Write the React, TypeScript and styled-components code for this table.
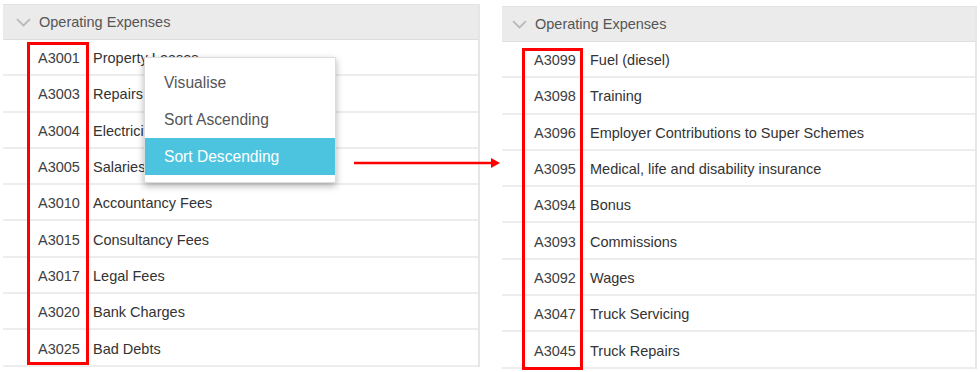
import React from "react";
import styled, { createGlobalStyle } from "styled-components";

const Global = createGlobalStyle`
  html, body { margin: 0; padding: 0; background: #ffffff; }
  body { font-family: Arial, "Liberation Sans", sans-serif; }
`;

const Page = styled.div`
  position: relative;
  display: flex;
  align-items: flex-start;
  gap: 22px;
  padding: 4px 0 0 3px;
  width: 980px;
  height: 372px;
  box-sizing: border-box;
  overflow: hidden;
`;

const Panel = styled.div<{ $w: number; $top: number }>`
  position: relative;
  width: ${(p) => p.$w}px;
  margin-top: ${(p) => p.$top}px;
  border-right: 2px solid #e6e6e6;
  box-sizing: border-box;
`;

const Header = styled.div<{ $pad: number }>`
  display: flex;
  align-items: center;
  height: 36px;
  box-sizing: border-box;
  background: #ebebeb;
  border-top: 1px solid #e2e2e2;
  border-bottom: 1px solid #dedede;
  padding-left: ${(p) => p.$pad}px;
  color: #555555;
  font-size: 14.5px;
`;

const Chevron = styled.svg`
  width: 15px;
  height: 9px;
  margin-right: 8px;
  flex-shrink: 0;
`;

const Row = styled.div`
  display: flex;
  align-items: center;
  height: 36.3px;
  padding-top: 2px;
  box-sizing: border-box;
  border-bottom: 2px solid #ededed;
  font-size: 14.5px;
  color: #333333;
`;

const Code = styled.div<{ $pad: number; $w: number }>`
  width: ${(p) => p.$w}px;
  padding-left: ${(p) => p.$pad}px;
  box-sizing: border-box;
  flex-shrink: 0;
  color: #404040;
`;

const Name = styled.div`
  white-space: nowrap;
`;

const RedBox = styled.div<{ $l: number; $t: number; $w: number; $h: number }>`
  position: absolute;
  left: ${(p) => p.$l}px;
  top: ${(p) => p.$t}px;
  width: ${(p) => p.$w}px;
  height: ${(p) => p.$h}px;
  border: 3px solid #ff0000;
  box-sizing: border-box;
  pointer-events: none;
`;

const Menu = styled.div`
  position: absolute;
  left: 141px;
  top: 53px;
  width: 192px;
  padding: 6px 0 7px;
  background: #ffffff;
  border: 1px solid #dcdcdc;
  box-shadow: 0 3px 7px rgba(0, 0, 0, 0.3);
  box-sizing: border-box;
`;

const MenuItem = styled.div<{ $active?: boolean }>`
  height: 37px;
  display: flex;
  align-items: center;
  padding-left: 19px;
  font-size: 15.6px;
  color: ${(p) => (p.$active ? "#ffffff" : "#555555")};
  background: ${(p) => (p.$active ? "#4dc4df" : "transparent")};
`;

const Arrow = styled.svg`
  position: absolute;
  left: 352px;
  top: 157px;
  width: 150px;
  height: 12px;
`;

const left = [
  ["A3001", "Property Leases"],
  ["A3003", "Repairs"],
  ["A3004", "Electricity"],
  ["A3005", "Salaries"],
  ["A3010", "Accountancy Fees"],
  ["A3015", "Consultancy Fees"],
  ["A3017", "Legal Fees"],
  ["A3020", "Bank Charges"],
  ["A3025", "Bad Debts"],
];

const right = [
  ["A3099", "Fuel (diesel)"],
  ["A3098", "Training"],
  ["A3096", "Employer Contributions to Super Schemes"],
  ["A3095", "Medical, life and disability insurance"],
  ["A3094", "Bonus"],
  ["A3093", "Commissions"],
  ["A3092", "Wages"],
  ["A3047", "Truck Servicing"],
  ["A3045", "Truck Repairs"],
];

const ChevronIcon = () => (
  <Chevron viewBox="0 0 15 9">
    <path d="M1 1.2 L7.5 7.5 L14 1.2" fill="none" stroke="#b9b9b9" strokeWidth="1.8" />
  </Chevron>
);

export default function App() {
  return (
    <>
      <Global />
      <Page>
        <Panel $w={477} $top={0}>
          <Header $pad={13}>
            <ChevronIcon />
            Operating Expenses
          </Header>
          {left.map(([c, n]) => (
            <Row key={c}>
              <Code $pad={35} $w={90}>{c}</Code>
              <Name>{n}</Name>
            </Row>
          ))}
          <RedBox $l={24} $t={38} $w={62} $h={323} />
          <Menu>
            <MenuItem>Visualise</MenuItem>
            <MenuItem>Sort Ascending</MenuItem>
            <MenuItem $active>Sort Descending</MenuItem>
          </Menu>
        </Panel>
        <Panel $w={475} $top={2}>
          <Header $pad={10}>
            <ChevronIcon />
            Operating Expenses
          </Header>
          {right.map(([c, n]) => (
            <Row key={c}>
              <Code $pad={32} $w={88}>{c}</Code>
              <Name>{n}</Name>
            </Row>
          ))}
          <RedBox $l={20} $t={42} $w={61} $h={322} />
        </Panel>
        <Arrow viewBox="0 0 150 12">
          <line x1="2" y1="6" x2="140" y2="6" stroke="#ff0000" strokeWidth="2.6" />
          <polygon points="139,1 148,6 139,11" fill="#ff0000" />
        </Arrow>
      </Page>
    </>
  );
}
